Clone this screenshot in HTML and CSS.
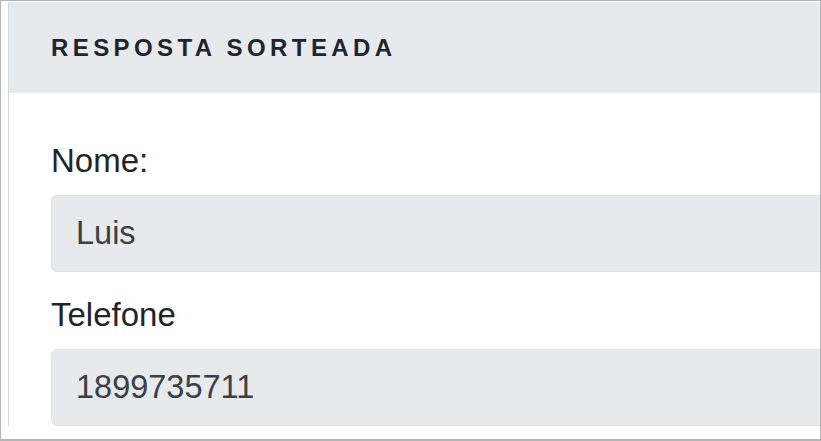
FILE: index.html
```html
<!DOCTYPE html>
<html lang="pt-BR">
<head>
<meta charset="utf-8">
<title>Resposta sorteada</title>
<link rel="stylesheet" href="styles.css">
</head>
<body>
<div class="frame">
  <div class="card">
    <div class="card-header">RESPOSTA SORTEADA</div>
    <div class="card-body">
      <div class="form-group">
        <label class="label">Nome:</label>
        <div class="input"><span class="value">Luis</span></div>
      </div>
      <div class="form-group">
        <label class="label">Telefone</label>
        <div class="input"><span class="value">1899735711</span></div>
      </div>
    </div>
  </div>
</div>
</body>
</html>
```

FILE: styles.css
```css
html, body {
  margin: 0;
  padding: 0;
  background: #ffffff;
}

.frame {
  width: 821px;
  height: 441px;
  box-sizing: border-box;
  border: 1px solid #b5b5b5;
  border-bottom-width: 2px;
  padding-left: 7px;
  overflow: hidden;
  font-family: "Liberation Sans", Arial, sans-serif;
}

.card {
  width: 900px;
  border-left: 1px solid #d6d8da;
  margin-top: 1px;
  background: #fff;
}

.card-header {
  height: 91px;
  display: flex;
  align-items: center;
  padding-left: 42px;
  background: #e7eaed;
  color: #1f252b;
  font-weight: bold;
  font-size: 24px;
  letter-spacing: 4.4px;
}

.card-body {
  padding: 42px 0 0 42px;
}

.form-group {
  margin-bottom: 17px;
}

.label {
  display: block;
  font-size: 33px;
  line-height: 51px;
  color: #212529;
  margin-bottom: 9px;
}

.input {
  height: 77px;
  box-sizing: border-box;
  display: flex;
  align-items: center;
  padding-left: 24px;
  background: #e7eaed;
  border: 1px solid #dde0e4;
  border-radius: 6px;
  font-size: 32.5px;
  color: #3a4046;
}

.value {
  display: block;
  white-space: nowrap;
}
```
